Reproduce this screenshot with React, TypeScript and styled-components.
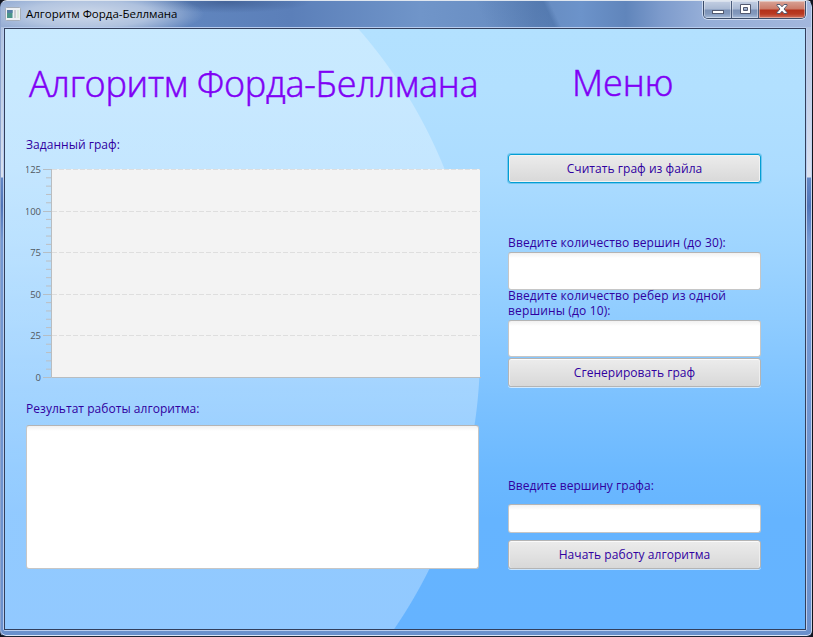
import React from "react";
import styled, { createGlobalStyle } from "styled-components";

const GlobalStyle = createGlobalStyle`
  html, body { margin: 0; padding: 0; overflow: hidden; background: #10141f; }
  *, *::before, *::after { box-sizing: border-box; }
`;

const WindowFrame = styled.div`
  width: 813px;
  height: 637px;
  display: grid;
  grid-template-rows: 26px 604px;
  grid-template-columns: 2px 804px;
  column-gap: 0;
  overflow: hidden;
  border-style: solid;
  border-width: 1px 1px 1px 1px;
  border-color: #dfe6ef #10131c #1c2333 #8fa6cf;
  border-radius: 7px 7px 6px 6px;
  box-shadow: inset -1px 0 0 #c3d4f0, inset 0 -1px 0 #dbe6f8;
  background:
    linear-gradient(180deg, #a9bddd 0, #d3dcee 150px, #dbe2f0 176px, #6388c6 177px, #4f74b8 205px, #7599d3 240px, #6a90cc 637px);
  font-family: "Open Sans", "Noto Sans", sans-serif;
`;

const TitleBar = styled.header`
  grid-column: 1 / -1;
  width: 810px;
  height: 26px;
  display: flex;
  align-items: flex-start;
  background:
    radial-gradient(ellipse 115px 24px at 88px 13px, rgba(214, 223, 237, 0.9) 0, rgba(196, 210, 231, 0.75) 55%, rgba(150, 175, 214, 0) 100%),
    radial-gradient(ellipse 85px 11px at 225px 1px, rgba(45, 72, 120, 0.5), rgba(45, 72, 120, 0)),
    linear-gradient(65deg, transparent 440px, rgba(42, 80, 135, 0.3) 502px, transparent 508px),
    linear-gradient(90deg, #8fa8d1 0, #6085be 190px, #5b7fb9 290px, #7095c9 420px, #668bc0 535px, #6c93ca 580px, #6085bb 625px, #7d9bcc 660px, #94add7 700px, #a3b7dd 811px);
`;

const AppIcon = styled.svg`
  width: 16px;
  height: 14px;
  margin: 6px 0 0 4px;
`;

const WindowTitle = styled.span`
  margin-left: 5px;
  width: 672px;
  font-size: 11.5px;
  line-height: 16px;
  padding-top: 5px;
  letter-spacing: -0.02px;
  color: #000;
  white-space: nowrap;
`;

const WindowControls = styled.div`
  display: flex;
  width: 103px;
  height: 18px;
  margin-left: 5px;
  border: 1px solid #3c4c68;
  border-top: 0;
  border-radius: 0 0 5px 5px;
  box-shadow: 0 0 0 1px rgba(225, 235, 250, 0.75);
  overflow: hidden;
`;

const ControlButton = styled.button<{ $width: number; $danger?: boolean }>`
  width: ${(p) => p.$width}px;
  height: 17px;
  padding: 0;
  border: 0;
  border-right: ${(p) => (p.$danger ? "0" : "1px solid #4a5c7c")};
  box-shadow: inset 0 0 0 1px rgba(255, 255, 255, 0.38);
  display: flex;
  justify-content: center;
  background: ${(p) =>
    p.$danger
      ? "linear-gradient(180deg, #d8a397 0, #cb7a68 8px, #b3301a 9px, #b93a22 13px, #cf7260 17px)"
      : "linear-gradient(180deg, #c3cfe3 0, #a9b9d3 8px, #7c92b7 9px, #8399bd 13px, #a9bddb 17px)"};
`;

const Content = styled.main`
  grid-column: 2;
  width: 804px;
  height: 604px;
  border: 1px solid #b9cdef;
  border-radius: 2px;
`;

const Scene = styled.div`
  width: 802px;
  height: 602px;
  border: 1px solid #323f5c;
  display: flex;
  background:
    radial-gradient(circle at -15px 323px, rgba(255, 255, 255, 0.29) 489.5px, rgba(255, 255, 255, 0) 490.5px),
    linear-gradient(180deg, #b3e1ff 0, #b2e0ff 60px, #acdcff 140px, #9fd5ff 215px, #8fccff 290px, #7dc2ff 365px, #6cb9ff 440px, #65b4ff 490px, #65b3ff 600px);
`;

const GraphColumn = styled.section`
  width: 460px;
  margin-left: 21px;
  display: flex;
  flex-direction: column;
`;

const MenuColumn = styled.section`
  width: 253px;
  margin-left: 22px;
  display: flex;
  flex-direction: column;
`;

const Heading = styled.h1<{ $indent: number; $top: number; $spacing: number }>`
  margin: ${(p) => p.$top}px 0 0 ${(p) => p.$indent}px;
  height: 50px;
  line-height: 50px;
  font-size: 36px;
  font-weight: 300;
  -webkit-text-stroke: 0.55px #8000f5;
  letter-spacing: ${(p) => p.$spacing}px;
  color: #8000f5;
  white-space: nowrap;
`;

const Label = styled.label<{ $top?: number; $spacing?: number }>`
  display: block;
  margin-top: ${(p) => p.$top ?? 0}px;
  font-size: 12px;
  line-height: 15px;
  letter-spacing: ${(p) => p.$spacing ?? 0.04}px;
  color: #3000a0;
  white-space: pre-line;
`;

const Chart = styled.svg`
  display: block;
  width: 460px;
  height: 226px;
  margin-top: 8px;
`;

const AxisText = styled.text`
  font-size: 9.5px;
  fill: #505860;
  text-anchor: end;
`;

const Output = styled.textarea`
  width: 453px;
  height: 144px;
  margin: 9px 0 0;
  resize: none;
  border: 1px solid #c6c6c6;
  border-top-color: #b4b4b4;
  border-radius: 3px;
  outline: 0;
  background: linear-gradient(180deg, #f1f1f1 0, #fff 5px);
`;

const Field = styled.input<{ $height: number; $top: number }>`
  width: 253px;
  height: ${(p) => p.$height}px;
  margin: ${(p) => p.$top}px 0 0;
  border: 1px solid #c6c6c6;
  border-top-color: #b4b4b4;
  border-radius: 3px;
  outline: 0;
  background: linear-gradient(180deg, #f1f1f1 0, #fff 5px);
`;

const ActionButton = styled.button<{ $top: number; $focused?: boolean }>`
  width: 253px;
  height: 29px;
  margin: ${(p) => p.$top}px 0 0;
  padding: 1px 0 0;
  border: 1px solid ${(p) => (p.$focused ? "#039ed3" : "#b4b4b4")};
  border-radius: 3px;
  box-shadow: ${(p) =>
    p.$focused
      ? "inset 0 0 0 1px #f2f2f2, 0 0 0 1px rgba(3, 158, 211, 0.35)"
      : "inset 0 1px 0 #fbfbfb, inset 1px 0 0 #eee, inset -1px 0 0 #eee, 0 1px 0 rgba(255, 255, 255, 0.65)"};
  background: linear-gradient(180deg, #ececec, #d8d8d8);
  font: 400 12px/16px "Open Sans", "Noto Sans", sans-serif;
  letter-spacing: 0.05px;
  color: #3000a0;
`;

const MAJOR = [125, 100, 75, 50, 25, 0];
const MINOR = Array.from({ length: 26 }, (_, i) => i).filter((i) => i % 5 !== 0);
const axisY = (value: number) => Math.round(9 + (125 - value) * 1.664) + 0.5;

function GraphChart() {
  return (
    <Chart viewBox="0 0 460 226">
      <rect x="26" y="9" width="428" height="209" fill="#f3f3f3" />
      {MAJOR.slice(0, 5).map((v) => (
        <line key={v} x1="26" x2="454" y1={axisY(v)} y2={axisY(v)} stroke="#dedede" strokeDasharray="5 2" />
      ))}
      {MINOR.map((i) => (
        <line key={i} x1="20" x2="25" y1={9.5 + i * 8.32} y2={9.5 + i * 8.32} stroke="#bdbfc2" />
      ))}
      {MAJOR.map((v) => (
        <g key={v}>
          <line x1="17" x2="25" y1={axisY(v)} y2={axisY(v)} stroke="#b6bec4" />
          <AxisText x="15" y={axisY(v) + 3.5}>{v}</AxisText>
        </g>
      ))}
      <path d="M25.5 9V217.5H455" fill="none" stroke="#b8bdc1" />
    </Chart>
  );
}

export default function App() {
  return (
    <>
      <GlobalStyle />
      <WindowFrame>
        <TitleBar>
          <AppIcon viewBox="0 0 16 14">
            <rect x="0.5" y="0.5" width="15" height="13" rx="1" fill="#eef1f4" stroke="#a5aeba" />
            <rect x="2" y="3" width="5.5" height="8" fill="#4a9589" />
            <rect x="2" y="3" width="5.5" height="3" fill="#557fa5" />
            <rect x="9" y="3" width="2" height="8" fill="#c9ced2" />
            <rect x="12" y="3" width="2" height="8" fill="#dcebdc" />
          </AppIcon>
          <WindowTitle>Алгоритм Форда-Беллмана</WindowTitle>
          <WindowControls>
            <ControlButton $width={28} aria-label="Свернуть">
              <svg width="14" height="17" viewBox="0 0 14 17">
                <rect x="1.5" y="9.5" width="11" height="3" fill="#fff" stroke="#535a70" />
              </svg>
            </ControlButton>
            <ControlButton $width={27} aria-label="Развернуть">
              <svg width="13" height="17" viewBox="0 0 13 17">
                <path d="M1.5 3.5h10v9h-10zM4.5 6.5v3h4v-3z" fill="#fff" fillRule="evenodd" stroke="#535a70" />
              </svg>
            </ControlButton>
            <ControlButton $width={46} $danger aria-label="Закрыть">
              <svg width="14" height="17" viewBox="0 0 14 17">
                <path d="M2 3.5h3l2 2.3 2-2.3h3v1L9 8l3 3.5v1H9l-2-2.3-2 2.3H2v-1L5 8 2 4.5z" fill="#fff" stroke="#535a70" />
              </svg>
            </ControlButton>
          </WindowControls>
        </TitleBar>
        <Content>
          <Scene>
            <GraphColumn>
              <Heading $indent={3} $top={30} $spacing={-0.27}>Алгоритм Форда-Беллмана</Heading>
              <Label $top={28}>Заданный граф:</Label>
              <GraphChart />
              <Label $top={15}>Результат работы алгоритма:</Label>
              <Output readOnly />
            </GraphColumn>
            <MenuColumn>
              <Heading $indent={64} $top={29} $spacing={0}>Меню</Heading>
              <ActionButton $top={46} $focused>Считать граф из файла</ActionButton>
              <Label $top={52} $spacing={0.14}>Введите количество вершин (до 30):</Label>
              <Field $height={38} $top={2} />
              <Label $top={-2} $spacing={0.14}>{"Введите количество ребер из одной\nвершины (до 10):"}</Label>
              <Field $height={37} $top={2} />
              <ActionButton $top={1}>Сгенерировать граф</ActionButton>
              <Label $top={91}>Введите вершину графа:</Label>
              <Field $height={29} $top={11} />
              <ActionButton $top={7}>Начать работу алгоритма</ActionButton>
            </MenuColumn>
          </Scene>
        </Content>
      </WindowFrame>
    </>
  );
}
